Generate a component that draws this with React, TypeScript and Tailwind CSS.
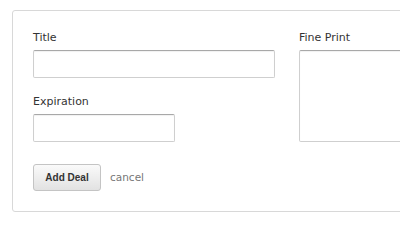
export default function App() {
  return (
    <main className="min-h-screen w-full overflow-hidden bg-white pl-3 pt-2.5 font-['DejaVu_Sans',sans-serif]">
      <div className="w-[440px] rounded-[3px] border border-[#d8d8d8] px-5 pt-5 pb-5">
        <div className="flex gap-6">
          <div className="w-[242px] shrink-0">
            <label className="mb-1.5 block text-[11px] leading-[13px] text-[#333]">Title</label>
            <input
              type="text"
              className="block h-7 w-[242px] rounded-[2px] border border-[#cfcfcf] border-t-[#a8a8a8] bg-white shadow-[inset_0_1px_1px_rgba(0,0,0,0.06)] outline-none"
            />
            <label className="mt-[17px] mb-1.5 block text-[11px] leading-[13px] text-[#333]">Expiration</label>
            <input
              type="text"
              className="block h-7 w-[142px] rounded-[2px] border border-[#cfcfcf] border-t-[#a8a8a8] bg-white shadow-[inset_0_1px_1px_rgba(0,0,0,0.06)] outline-none"
            />
          </div>
          <div className="flex-1">
            <label className="mb-1.5 block text-[11px] leading-[13px] text-[#333]">Fine Print</label>
            <textarea className="block h-[92px] w-full resize-none rounded-[2px] border border-[#cfcfcf] border-t-[#a8a8a8] bg-white shadow-[inset_0_1px_1px_rgba(0,0,0,0.06)] outline-none" />
          </div>
        </div>
        <div className="mt-[22px] flex items-center gap-[9px]">
          <button className="h-[27px] w-[68px] rounded-[3px] border border-[#c4c4c4] bg-gradient-to-b from-[#fafafa] to-[#e2e2e2] font-['Liberation_Sans',sans-serif] text-[10px] font-bold text-[#333]">
            Add Deal
          </button>
          <a className="text-[10.5px] text-[#777]">cancel</a>
        </div>
      </div>
    </main>
  );
}
